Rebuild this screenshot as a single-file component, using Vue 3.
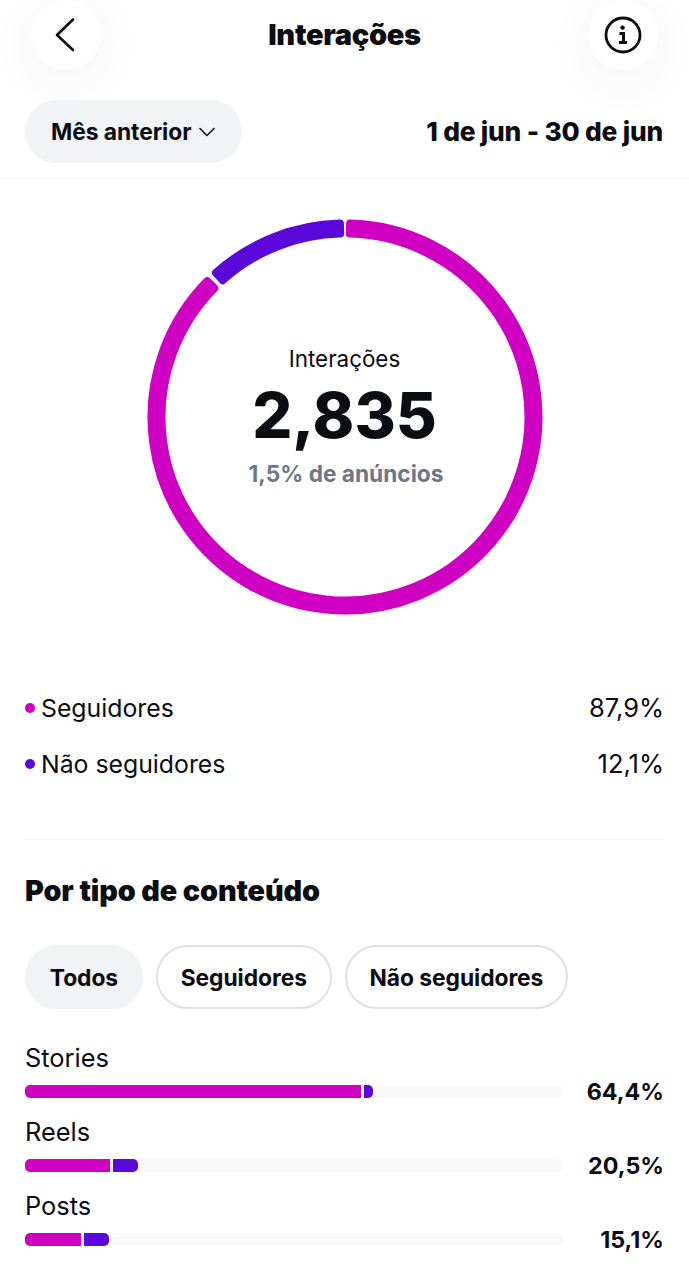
<template>
  <div class="page">
    <header class="topbar">
      <button class="round-btn">
        <svg width="24" height="36" viewBox="0 0 24 36" fill="none">
          <path d="M19 2.5 L3 18 L19 33" stroke="#0b0d12" stroke-width="2.6" stroke-linecap="round" stroke-linejoin="round" />
        </svg>
      </button>
      <h1>Interações</h1>
      <button class="round-btn">
        <svg width="38" height="38" viewBox="0 0 38 38" fill="none">
          <circle cx="19" cy="19" r="17" stroke="#0b0d12" stroke-width="2.8" />
          <circle cx="18.6" cy="11.6" r="2.2" fill="#0b0d12" />
          <path d="M15.5 17.5h4v8.5M15 26.5h8" stroke="#0b0d12" stroke-width="3" />
        </svg>
      </button>
    </header>

    <div class="period">
      <button class="chip chip-active period-chip">
        Mês anterior
        <svg width="16" height="10" viewBox="0 0 16 10" fill="none">
          <path d="M1 1.5l7 7 7-7" stroke="#0b0d12" stroke-width="1.5" stroke-linecap="round" stroke-linejoin="round" />
        </svg>
      </button>
      <span class="dates">1 de jun - 30 de jun</span>
    </div>

    <section class="ring-section">
      <div class="ring">
        <svg width="396" height="396" viewBox="-198 -198 396 396">
          <path v-for="arc in arcs" :key="arc.color" :d="arc.d" :fill="arc.color" :stroke="arc.color" stroke-width="8" stroke-linejoin="round" />
        </svg>
        <div class="ring-text">
          <span class="ring-label">Interações</span>
          <strong class="ring-total">2,835</strong>
          <span class="ring-ads">1,5% de anúncios</span>
        </div>
      </div>
    </section>

    <ul class="legend">
      <li v-for="item in legend" :key="item.label">
        <i class="dot" :style="{ background: item.color }"></i>
        <span class="legend-label">{{ item.label }}</span>
        <span class="legend-value">{{ item.value }}</span>
      </li>
    </ul>

    <section class="content-types">
      <h2>Por tipo de conteúdo</h2>
      <div class="chips">
        <button class="chip chip-active">Todos</button>
        <button class="chip">Seguidores</button>
        <button class="chip">Não seguidores</button>
      </div>

      <div v-for="row in rows" :key="row.label" class="bar-row">
        <div class="bar-label">{{ row.label }}</div>
        <div class="bar-line">
          <div class="track">
            <div class="seg seg-a" :style="{ width: row.a + 'px' }"></div>
            <div class="seg seg-b" :style="{ width: row.b + 'px' }"></div>
          </div>
          <span class="bar-value">{{ row.value }}</span>
        </div>
      </div>
    </section>
  </div>
</template>

<script setup>
const MAGENTA = '#cf00c2';
const PURPLE = '#5a08da';

// annular sector, angles in degrees clockwise from 12 o'clock
const sector = (from, to, inner, outer) => {
  const pt = (r, deg) => {
    const a = (deg * Math.PI) / 180;
    return `${(r * Math.sin(a)).toFixed(2)} ${(-r * Math.cos(a)).toFixed(2)}`;
  };
  const large = to - from > 180 ? 1 : 0;
  return `M${pt(outer, from)} A${outer} ${outer} 0 ${large} 1 ${pt(outer, to)} L${pt(inner, to)} A${inner} ${inner} 0 ${large} 0 ${pt(inner, from)} Z`;
};

const arcs = [
  { color: MAGENTA, d: sector(1.5, 314.6, 183.5, 193.5) },
  { color: PURPLE, d: sector(318.2, 358.5, 183.5, 193.5) },
];

const legend = [
  { label: 'Seguidores', value: '87,9%', color: MAGENTA },
  { label: 'Não seguidores', value: '12,1%', color: PURPLE },
];

const rows = [
  { label: 'Stories', a: 336, b: 9, value: '64,4%' },
  { label: 'Reels', a: 85, b: 25, value: '20,5%' },
  { label: 'Posts', a: 56, b: 25, value: '15,1%' },
];
</script>

<style>
html,
body {
  margin: 0;
  background: #fff;
}
</style>

<style scoped>
.page {
  width: 689px;
  height: 1280px;
  overflow: hidden;
  font-family: Inter, "Noto Sans", sans-serif;
  color: #0b0d12;
  background: #fff;
}

button {
  font-family: inherit;
  color: inherit;
  cursor: pointer;
}

.topbar {
  height: 70px;
  padding: 0 31px;
  display: flex;
  align-items: center;
  justify-content: space-between;
}

.topbar h1 {
  margin: 0 0 2px;
  font-size: 29px;
  font-weight: 900;
  letter-spacing: -0.3px;
}

.round-btn {
  width: 70px;
  height: 70px;
  border: 0;
  border-radius: 50%;
  background: #fff;
  box-shadow: 0 10px 50px rgba(0, 0, 0, 0.06);
  display: flex;
  align-items: center;
  justify-content: center;
  padding: 0;
}

.period {
  position: relative;
  margin-top: 30px;
  height: 79px;
  padding: 0 26px 15px 25px;
  box-sizing: border-box;
  display: flex;
  align-items: flex-start;
  justify-content: space-between;
  border-bottom: 1px solid #f4f4f5;
}

.chip {
  height: 64px;
  padding: 0 22.8px;
  border: 2px solid #dfe0e2;
  border-radius: 32px;
  background: #fff;
  font-size: 22.8px;
  font-weight: 700;
  letter-spacing: -0.05px;
  display: inline-flex;
  align-items: center;
}

.chip-active {
  background: #f2f3f5;
  border-color: #f2f3f5;
}

.period-chip {
  gap: 8px;
  width: 217px;
  height: 63px;
  padding: 0 24px;
  white-space: nowrap;
}

.dates {
  font-size: 26.3px;
  font-weight: 800;
  line-height: 64px;
  letter-spacing: -0.2px;
}

.ring-section {
  display: flex;
  justify-content: center;
  padding-top: 40px;
}

.ring {
  position: relative;
  width: 396px;
  height: 396px;
}

.ring svg {
  display: block;
}

.ring-text {
  position: absolute;
  inset: 0;
  display: flex;
  flex-direction: column;
  align-items: center;
  justify-content: center;
}

.ring-label {
  font-size: 22.4px;
  line-height: 26px;
}

.ring-total {
  font-size: 63px;
  font-weight: 800;
  line-height: 86px;
}

.ring-ads {
  margin: 2px 0 0 3px;
  font-size: 22.7px;
  font-weight: 700;
  color: #6f7782;
  line-height: 28px;
}

.legend {
  list-style: none;
  margin: 65px 25px 0 25px;
  padding: 0 0 47px;
  border-bottom: 1px solid #f4f4f5;
}

.legend li {
  height: 56px;
  display: flex;
  align-items: center;
  font-size: 24.8px;
}

.dot {
  width: 10px;
  height: 10px;
  border-radius: 50%;
  margin-right: 6px;
}

.legend-label {
  flex: 1;
}

.legend-value {
  margin-bottom: 2px;
  font-size: 25.5px;
}

.content-types {
  padding: 0 25px;
}

.content-types h2 {
  margin: 34px 0 0;
  font-size: 28.8px;
  font-weight: 900;
  line-height: 34px;
  letter-spacing: -0.1px;
}

.chips {
  display: flex;
  gap: 13px;
  margin: 37px 0 30px;
}

.bar-row {
  height: 74px;
}

.bar-label {
  font-size: 25.4px;
  line-height: 38px;
}

.bar-line {
  display: flex;
  align-items: center;
  justify-content: space-between;
}

.track {
  width: 538px;
  height: 13px;
  border-radius: 6px;
  background: #f9f9f9;
  display: flex;
  gap: 3px;
}

.seg {
  height: 100%;
}

.seg-a {
  background: #cf00c2;
  border-radius: 5px 0 0 5px;
}

.seg-b {
  background: #5a08da;
  border-radius: 0 5px 5px 0;
}

.bar-value {
  font-size: 23.3px;
  font-weight: 700;
}
</style>
